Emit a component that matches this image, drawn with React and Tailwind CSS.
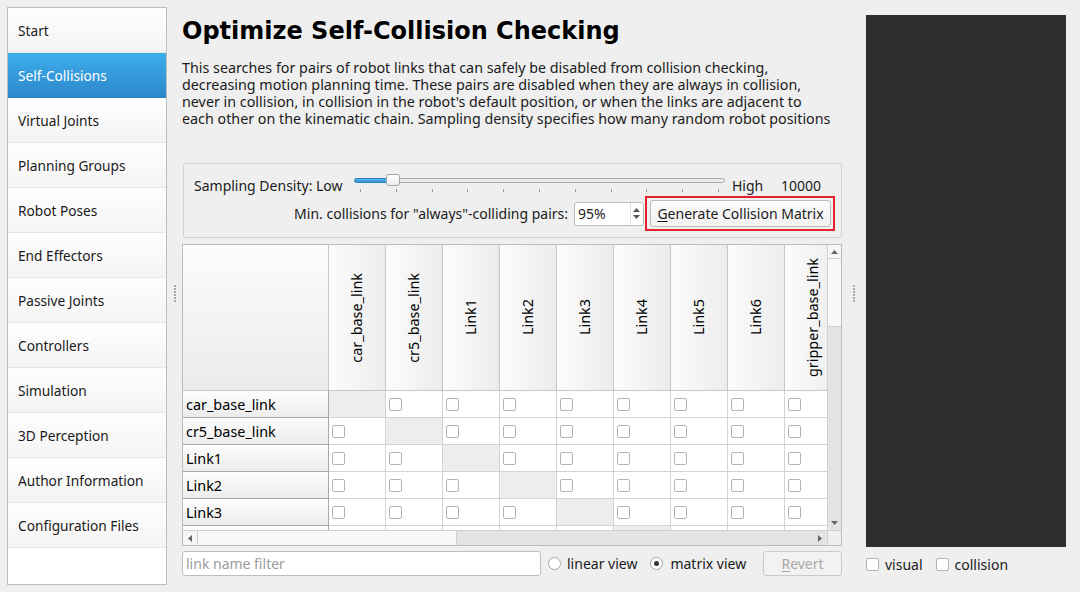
import React from "react";

const navItems = [
  "Start",
  "Self-Collisions",
  "Virtual Joints",
  "Planning Groups",
  "Robot Poses",
  "End Effectors",
  "Passive Joints",
  "Controllers",
  "Simulation",
  "3D Perception",
  "Author Information",
  "Configuration Files",
];

const cols = [
  "car_base_link",
  "cr5_base_link",
  "Link1",
  "Link2",
  "Link3",
  "Link4",
  "Link5",
  "Link6",
  "gripper_base_link",
];
const rows = ["car_base_link", "cr5_base_link", "Link1", "Link2", "Link3", "Link4"];

function Box() {
  return <div className="w-[13px] h-[13px] border border-[#b3b3b3] rounded-[2px] bg-white shrink-0" />;
}

function Dots() {
  return (
    <div className="flex flex-col gap-[1px]">
      {[0, 1, 2, 3, 4, 5].map((i) => (
        <div key={i} className="w-[2px] h-[2px] bg-[#a9a9a9]" />
      ))}
    </div>
  );
}

export default function App() {
  return (
    <div className="w-[1080px] h-[592px] bg-[#efefef] flex text-[14px] text-[#1b1b1b] overflow-hidden font-['Noto_Sans',sans-serif]">
      {/* Sidebar */}
      <div className="ml-[7px] mt-[7px] w-[160px] h-[578px] border border-[#bdbdbd] bg-white flex flex-col text-[13.7px]">
        {navItems.map((n, i) =>
          i === 1 ? (
            <div
              key={n}
              className="h-[45px] shrink-0 flex items-center pl-[10px] pt-[2px] text-white bg-gradient-to-b from-[#3eaeec] to-[#2c88cb] border-b border-[#2a7fbf]"
            >
              {n}
            </div>
          ) : (
            <div
              key={n}
              className="h-[45px] shrink-0 flex items-center pl-[10px] pt-[2px] bg-gradient-to-b from-[#fefefe] to-[#f4f4f4] border-b border-[#e6e6e6]"
            >
              {n}
            </div>
          )
        )}
      </div>

      {/* splitter */}
      <div className="w-[15px] flex items-center justify-center pb-[6px]">
        <Dots />
      </div>

      {/* Main */}
      <div className="w-[660px] flex flex-col">
        <div className="h-[30px] mt-[16px] leading-[30px] text-[24px] font-bold text-black font-['DejaVu_Sans',sans-serif] whitespace-nowrap">
          Optimize Self-Collision Checking
        </div>
        <div className="mt-[13px] h-[68px] text-[14.3px] leading-[17px] whitespace-nowrap">
          <div>This searches for pairs of robot links that can safely be disabled from collision checking,</div>
          <div>decreasing motion planning time. These pairs are disabled when they are always in collision,</div>
          <div>never in collision, in collision in the robot's default position, or when the links are adjacent to</div>
          <div>each other on the kinematic chain. Sampling density specifies how many random robot positions</div>
        </div>

        {/* Group box */}
        <div className="mt-[36px] h-[75px] ml-[1px] w-[659px] border border-[#d2d2d2] rounded-[2px] flex flex-col pt-[10px]">
          <div className="h-[22px] flex items-center pl-[10px]">
            <div className="w-[160px] whitespace-nowrap">Sampling Density: Low</div>
            <div className="relative w-[371px] h-[22px]">
              <div className="absolute left-0 right-0 top-[4px] h-[5px] rounded-full border border-[#a8a8a8] bg-[#ececec]" />
              <div className="absolute left-0 w-[36px] top-[4px] h-[5px] rounded-l-full bg-gradient-to-b from-[#5cb8ee] to-[#2f8fd0] border border-[#2c84c2]" />
              <div className="absolute left-[32px] top-0 w-[14px] h-[12px] rounded-[3px] border border-[#a5a5a5] bg-gradient-to-b from-white to-[#ececec]" />
              {Array.from({ length: 11 }).map((_, i) => (
                <div
                  key={i}
                  className="absolute top-[15px] w-[1px] h-[3px] bg-[#9a9a9a]"
                  style={{ left: 6 + Math.round(i * 35.8) }}
                />
              ))}
            </div>
            <div className="ml-[7px] w-[49px]">High</div>
            <div>10000</div>
          </div>
          <div className="h-[35px] flex items-center justify-end pr-[6px]">
            <div className="whitespace-nowrap">Min. collisions for "always"-colliding pairs:</div>
            <div className="ml-[6px] w-[70px] h-[24px] bg-white border border-[#bdbdbd] rounded-[3px] flex items-center">
              <span className="pl-[3px] flex-1">95%</span>
              <div className="w-[12px] h-full mr-[1px] border-l border-[#e2e2e2] flex flex-col items-center justify-center gap-[3px]">
                <svg width="7" height="4" viewBox="0 0 7 4"><path d="M0 4 L3.5 0 L7 4 Z" fill="#555" /></svg>
                <svg width="7" height="4" viewBox="0 0 7 4"><path d="M0 0 L3.5 4 L7 0 Z" fill="#555" /></svg>
              </div>
            </div>
            <div className="ml-[1px] w-[190px] h-[35px] border-2 border-[#e2222c] pl-[3px] pr-[2px] py-[2px]">
              <div className="w-full h-full border border-[#bcbcbc] rounded-[3px] bg-gradient-to-b from-[#fbfbfb] to-[#f1f1f1] flex items-center justify-center whitespace-nowrap">
                <span><span className="underline underline-offset-2">G</span>enerate Collision Matrix</span>
              </div>
            </div>
          </div>
        </div>

        {/* Table */}
        <div className="mt-[6px] h-[302px] border border-[#bcbcbc] flex flex-col bg-white">
          <div className="h-[285px] flex">
            <div className="w-[644px] h-[285px] overflow-hidden flex flex-col">
              <div className="h-[146px] shrink-0 flex border-b border-[#c6c6c6]">
                <div className="w-[146px] shrink-0 border-r border-[#c6c6c6] bg-gradient-to-b from-[#fcfcfc] to-[#ebebeb]" />
                {cols.map((c) => (
                  <div
                    key={c}
                    className="w-[57px] shrink-0 border-r border-[#c6c6c6] bg-gradient-to-r from-[#fcfcfc] to-[#ececec] flex items-center justify-center"
                  >
                    <span className="[writing-mode:vertical-rl] rotate-180 whitespace-nowrap text-black text-[14.4px]">{c}</span>
                  </div>
                ))}
              </div>
              {rows.map((r, ri) => (
                <div key={r} className="h-[27px] shrink-0 flex">
                  <div className="w-[146px] shrink-0 border-r border-b border-[#a9a9a9] bg-gradient-to-b from-[#fdfdfd] to-[#ececec] flex items-center pl-[3px] pt-[2px] text-black text-[14.4px]">
                    {r}
                  </div>
                  {cols.map((c, ci) => (
                    <div
                      key={c}
                      className={
                        ci === ri
                          ? "w-[57px] shrink-0 border-r border-b border-[#d3d3d3] bg-[#ededed]"
                          : "w-[57px] shrink-0 border-r border-b border-[#d3d3d3] bg-white flex items-center pl-[3px]"
                      }
                    >
                      {ci !== ri && <Box />}
                    </div>
                  ))}
                </div>
              ))}
            </div>
            {/* vertical scrollbar */}
            <div className="w-[14px] h-[285px] flex flex-col bg-[#e4e4e4] border-l border-[#d0d0d0]">
              <div className="h-[13px] bg-[#f6f6f6] flex items-center justify-center">
                <svg width="7" height="4" viewBox="0 0 7 4"><path d="M0 4 L3.5 0 L7 4 Z" fill="#666" /></svg>
              </div>
              <div className="h-[69px] bg-[#f8f8f8] border-t border-b border-[#cfcfcf]" />
              <div className="flex-1" />
              <div className="h-[14px] flex items-center justify-center">
                <svg width="7" height="4" viewBox="0 0 7 4"><path d="M0 0 L3.5 4 L7 0 Z" fill="#666" /></svg>
              </div>
            </div>
          </div>
          {/* horizontal scrollbar */}
          <div className="h-[15px] flex border-t border-[#d0d0d0]">
            <div className="w-[644px] flex bg-[#e4e4e4]">
              <div className="w-[14px] bg-[#f6f6f6] flex items-center justify-center">
                <svg width="4" height="7" viewBox="0 0 4 7"><path d="M4 0 L0 3.5 L4 7 Z" fill="#666" /></svg>
              </div>
              <div className="w-[260px] bg-[#f8f8f8] border-l border-r border-[#cfcfcf]" />
              <div className="flex-1" />
              <div className="w-[14px] flex items-center justify-center">
                <svg width="4" height="7" viewBox="0 0 4 7"><path d="M0 0 L4 3.5 L0 7 Z" fill="#666" /></svg>
              </div>
            </div>
            <div className="w-[14px] bg-[#efefef] border-l border-[#d0d0d0]" />
          </div>
        </div>

        {/* bottom row */}
        <div className="mt-[5px] h-[25px] flex items-center">
          <div className="w-[359px] h-[25px] bg-white border border-[#bdbdbd] rounded-[3px] flex items-center pl-[3px] text-[#9c9c9c]">
            link name filter
          </div>
          <div className="ml-[7px] w-[13px] h-[13px] rounded-full border border-[#a5a5a5] bg-white" />
          <span className="ml-[6px]">linear view</span>
          <div className="ml-[13px] w-[13px] h-[13px] rounded-full border border-[#a5a5a5] bg-white flex items-center justify-center">
            <div className="w-[5px] h-[5px] rounded-full bg-[#333]" />
          </div>
          <span className="ml-[7px]">matrix view</span>
          <div className="ml-auto w-[79px] h-[25px] border border-[#cacaca] rounded-[3px] bg-[#f2f2f2] flex items-center justify-center text-[#a8a8a8]">
            <span><span className="underline underline-offset-2">R</span>evert</span>
          </div>
        </div>
      </div>

      {/* splitter */}
      <div className="w-[24px] flex items-center justify-center pb-[6px]">
        <Dots />
      </div>

      {/* Right */}
      <div className="w-[200px] flex flex-col">
        <div className="mt-[15px] h-[532px] bg-[#2e2e2e]" />
        <div className="mt-[10px] h-[14px] flex items-center">
          <Box />
          <span className="ml-[6px]">visual</span>
          <div className="ml-[13px]"><Box /></div>
          <span className="ml-[6px]">collision</span>
        </div>
      </div>
    </div>
  );
}
